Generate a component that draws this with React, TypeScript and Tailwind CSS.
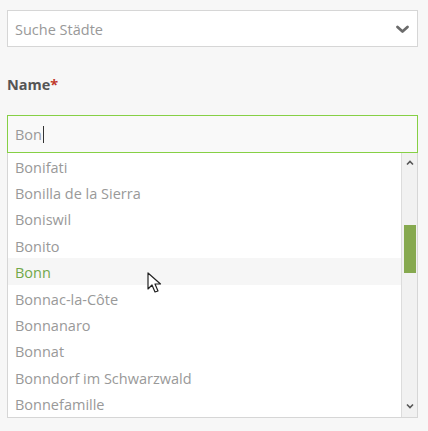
import React from 'react';

const cities = [
  'Bonifati',
  'Bonilla de la Sierra',
  'Boniswil',
  'Bonito',
  'Bonn',
  'Bonnac-la-Côte',
  'Bonnanaro',
  'Bonnat',
  'Bonndorf im Schwarzwald',
  'Bonnefamille',
];

const App: React.FC = () => {
  const active = 'Bonn';

  return (
    <div className="min-h-[431px] w-[428px] bg-[#f7f7f7] pl-[7px] pr-[10px] pt-[10px] font-['Open_Sans',sans-serif] text-[14.5px]">
      {/* select */}
      <div className="flex h-[37px] items-center justify-between border border-[#d6d6d6] bg-white pl-[7px] pr-[7px]">
        <span className="pt-[2px] text-[#999]">Suche Städte</span>
        <svg width="15" height="10" viewBox="0 0 15 10">
          <path d="M2.5 3 L7.5 7.5 L12.5 3" fill="none" stroke="#6b6b6b" strokeWidth="2.8" strokeLinecap="round" strokeLinejoin="round" />
        </svg>
      </div>

      <div className="mt-[27px] text-[14.5px] font-bold text-[#555]">
        Name<span className="text-[#c0392b]">*</span>
      </div>

      {/* input */}
      <div className="mt-[19px] flex h-[38px] items-center border border-[#86d045] bg-[#f9f9f9] pl-[7px] pt-[2px]">
        <span className="text-[#999]">Bon</span>
        <span className="ml-[1px] inline-block h-[17px] w-px bg-[#333]" />
      </div>

      {/* dropdown list */}
      <div className="relative flex border border-t-0 border-[#d6d6d6] bg-white">
        <ul className="flex-1">
          {cities.map((c) => (
            <li
              key={c}
              className={`flex h-[26.4px] items-center pl-[7px] pt-[3px] ${
                c === active ? 'bg-[#f6f6f6] text-[#72a84a]' : 'text-[#999]'
              }`}
            >
              {c}
            </li>
          ))}
        </ul>
        <div className="flex w-[16px] flex-col items-center border-l border-[#dcdcdc] bg-[#f1f1f1]">
          <svg className="mt-[7px]" width="8" height="6" viewBox="0 0 8 6">
            <path d="M1 4.5 L4 1.5 L7 4.5" fill="none" stroke="#555" strokeWidth="1.6" />
          </svg>
          <div className="mt-[59px] h-[48px] w-[12px] bg-[#86a94f]" />
          <div className="flex-1" />
          <svg className="mb-[8px]" width="8" height="6" viewBox="0 0 8 6">
            <path d="M1 1.5 L4 4.5 L7 1.5" fill="none" stroke="#555" strokeWidth="1.6" />
          </svg>
        </div>

        {/* mouse pointer */}
        <svg
          className="absolute left-[139px] top-[119px]"
          width="16"
          height="23"
          viewBox="0 0 16 23"
        >
          <path
            d="M1 1 L1 17 L5 13 L8 20 L11 19 L8 12 L13.5 12 Z"
            fill="#fff"
            stroke="#222"
            strokeWidth="1.2"
            strokeLinejoin="round"
          />
        </svg>
      </div>
    </div>
  );
};

export default App;
